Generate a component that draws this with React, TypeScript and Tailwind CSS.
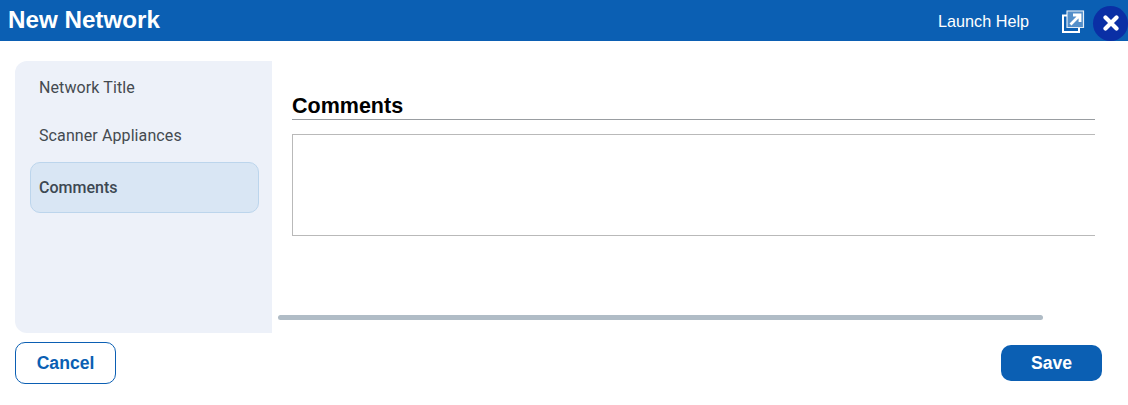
export default function App() {
  return (
    <div className="w-[1128px] h-[405px] bg-white flex flex-col overflow-hidden font-['Liberation_Sans',sans-serif]">
      {/* Title bar */}
      <header className="h-[41px] shrink-0 bg-[#0b5fb3] flex items-center pl-[8px] text-white">
        <h1 className="text-[24.2px] leading-[38px] font-bold -mt-[2px]">New Network</h1>
        <span className="ml-auto text-[16.2px] mt-[1px]">Launch Help</span>
        <svg className="ml-[32px] mt-[1px]" width="24" height="24" viewBox="0 0 24 24" fill="none">
          <rect x="6" y="1.5" width="17" height="17" fill="#fff" fillOpacity="0.3" />
          <path d="M6 2H22.5V18.5H6Z" stroke="#fff" strokeWidth="1.2" opacity="0.85" />
          <path d="M6 6.5H2V23H18V19" stroke="#fff" strokeWidth="2" />
          <path d="M9.5 15.5L18 7M12 6H19V13" stroke="#fff" strokeWidth="2.8" />
        </svg>
        <div className="ml-[8px] mt-[5px] w-[35px] h-[35px] shrink-0 rounded-full bg-[#0a2fa5] flex items-center justify-center">
          <svg width="16" height="16" viewBox="0 0 16 16">
            <path d="M2.5 2.5L13.5 13.5M13.5 2.5L2.5 13.5" stroke="#fff" strokeWidth="4.2" strokeLinecap="round" />
          </svg>
        </div>
      </header>

      <div className="flex pl-[15px] pt-[20px] h-[292px] shrink-0">
        {/* Steps */}
        <nav className="w-[257px] h-[272px] bg-[#edf1f9] rounded-l-[12px] pl-[15px] pt-[3px] font-['Roboto',sans-serif] text-[16px] text-[#444a50]">
          <div className="h-[48px] pl-[9px] flex items-center tracking-[0.1px]">Network Title</div>
          <div className="h-[48px] pl-[9px] flex items-center tracking-[0.1px]">Scanner Appliances</div>
          <div className="mt-[2px] w-[229px] h-[51px] pl-[8px] flex items-center font-medium text-[#3d4852] bg-[#d9e6f4] border border-[#bcd5ec] rounded-[10px]">
            Comments
          </div>
        </nav>

        {/* Content */}
        <main className="flex-1 min-w-0 flex flex-col">
          <section className="ml-[20px] mr-[33px] pt-[33px]">
            <h2 className="text-[21.5px] leading-[24px] font-bold text-black border-b border-[#999da1] pb-[1px]">Comments</h2>
            <div className="mt-[14px] h-[102px] border border-r-0 border-[#b9b9b9]" />
          </section>
          <div className="ml-[6px] mt-[79px] w-[765px] h-[5px] rounded-full bg-[#b0bcc6]" />
        </main>
      </div>

      {/* Actions */}
      <footer className="flex items-center justify-between pl-[15px] pr-[26px] pt-[9px]">
        <button className="w-[101px] h-[42px] rounded-[10px] border border-[#0b5fb3] bg-white text-[#0b5fb3] text-[17.6px] font-bold">
          Cancel
        </button>
        <button className="w-[101px] h-[36px] rounded-[10px] bg-[#0b5fb3] text-white text-[17.6px] font-bold">
          Save
        </button>
      </footer>
    </div>
  );
}
